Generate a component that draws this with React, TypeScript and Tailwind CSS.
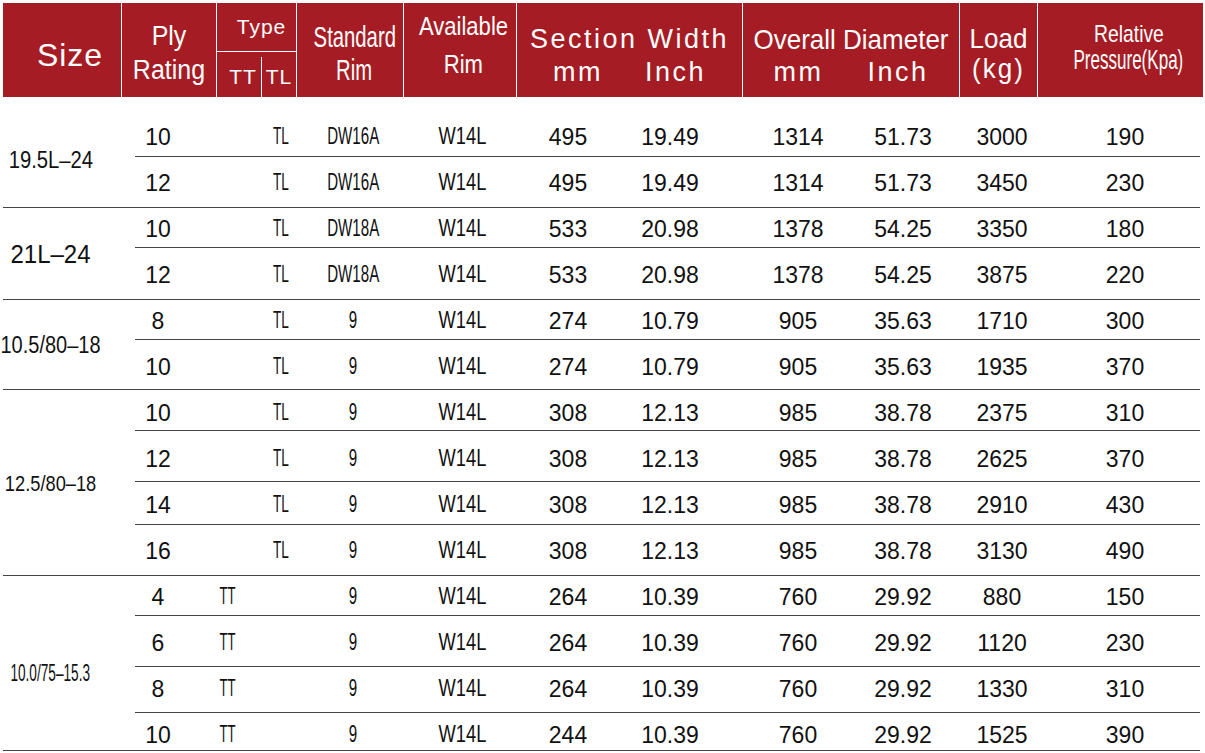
type Metric = { h: string; pt: string };

interface Group {
  size: string;
  sizeCls: string;
  pad: string;
  rows: string[][];
}

const metrics: Metric[] = [
  { h: "h-[60px]", pt: "pt-[27px]" },
  { h: "h-[50px]", pt: "pt-[13px]" },
  { h: "h-[40px]", pt: "pt-[8px]" },
  { h: "h-[51px]", pt: "pt-[14px]" },
  { h: "h-[40px]", pt: "pt-[8px]" },
  { h: "h-[49px]", pt: "pt-[14px]" },
  { h: "h-[41px]", pt: "pt-[10px]" },
  { h: "h-[51px]", pt: "pt-[15px]" },
  { h: "h-[43px]", pt: "pt-[10px]" },
  { h: "h-[50px]", pt: "pt-[13px]" },
  { h: "h-[40px]", pt: "pt-[8px]" },
  { h: "h-[51px]", pt: "pt-[14px]" },
  { h: "h-[46px]", pt: "pt-[9px]" },
  { h: "h-[37px]", pt: "pt-[9px]" },
];

const groups: Group[] = [
  {
    size: "19.5L–24",
    sizeCls: "text-[22px] scale-x-[0.92] scale-y-[1.1]",
    pad: "pt-[16px]",
    rows: [
      ["10", "", "TL", "DW16A", "W14L", "495", "19.49", "1314", "51.73", "3000", "190"],
      ["12", "", "TL", "DW16A", "W14L", "495", "19.49", "1314", "51.73", "3450", "230"],
    ],
  },
  {
    size: "21L–24",
    sizeCls: "text-[24px] scale-y-[1.05]",
    pad: "pt-[2px]",
    rows: [
      ["10", "", "TL", "DW18A", "W14L", "533", "20.98", "1378", "54.25", "3350", "180"],
      ["12", "", "TL", "DW18A", "W14L", "533", "20.98", "1378", "54.25", "3875", "220"],
    ],
  },
  {
    size: "10.5/80–18",
    sizeCls: "text-[23px] scale-x-[0.87] scale-y-[1.05]",
    pad: "pt-0",
    rows: [
      ["8", "", "TL", "9", "W14L", "274", "10.79", "905", "35.63", "1710", "300"],
      ["10", "", "TL", "9", "W14L", "274", "10.79", "905", "35.63", "1935", "370"],
    ],
  },
  {
    size: "12.5/80–18",
    sizeCls: "text-[21px] scale-x-[0.87] scale-y-[1.08]",
    pad: "pt-0",
    rows: [
      ["10", "", "TL", "9", "W14L", "308", "12.13", "985", "38.78", "2375", "310"],
      ["12", "", "TL", "9", "W14L", "308", "12.13", "985", "38.78", "2625", "370"],
      ["14", "", "TL", "9", "W14L", "308", "12.13", "985", "38.78", "2910", "430"],
      ["16", "", "TL", "9", "W14L", "308", "12.13", "985", "38.78", "3130", "490"],
    ],
  },
  {
    size: "10.0/75–15.3",
    sizeCls: "text-[22px] scale-x-[0.62] scale-y-[1.12]",
    pad: "pt-[20px]",
    rows: [
      ["4", "TT", "", "9", "W14L", "264", "10.39", "760", "29.92", "880", "150"],
      ["6", "TT", "", "9", "W14L", "264", "10.39", "760", "29.92", "1120", "230"],
      ["8", "TT", "", "9", "W14L", "264", "10.39", "760", "29.92", "1330", "310"],
      ["10", "TT", "", "9", "W14L", "244", "10.39", "760", "29.92", "1525", "390"],
    ],
  },
];

// text style per data column
const num = "text-[23px] scale-y-[1.08]";
const colCls = [
  num,
  "text-[22px] scale-x-[0.6] scale-y-[1.12]",
  "text-[22px] scale-x-[0.62] scale-y-[1.12]",
  "text-[21px] scale-x-[0.72] scale-y-[1.1]",
  "text-[21px] scale-x-[0.87] scale-y-[1.1]",
  num,
  num,
  num,
  num,
  num,
  num,
];

const T = ({ children, className }: { children: React.ReactNode; className: string }) => (
  <span className={`inline-block whitespace-nowrap ${className}`}>{children}</span>
);

const Header = () => (
  <div className="ml-[3px] mt-[3px] flex h-[94px] w-[1200px] bg-[#a61c24] text-white">
    <div className="flex w-[118px] items-center justify-center pl-[16px] pt-[10px]">
      <T className="text-[32px] tracking-[1px]">Size</T>
    </div>
    <div className="flex w-[95px] flex-col items-center justify-center border-l border-white pt-[4px] leading-[34px]">
      <T className="text-[25px] scale-y-[1.08]">Ply</T>
      <T className="text-[25px] scale-y-[1.08]">Rating</T>
    </div>
    <div className="flex w-[80px] flex-col border-l border-white">
      <div className="flex h-[49px] items-center justify-center border-b border-white pl-[10px]">
        <T className="text-[21px] tracking-[1px]">Type</T>
      </div>
      <div className="flex flex-1 pt-[5px]">
        <div className="flex w-[45px] items-center justify-center border-r border-white pl-2">
          <T className="text-[21px] tracking-[1px]">TT</T>
        </div>
        <div className="flex flex-1 items-center justify-center">
          <T className="text-[21px] tracking-[1px]">TL</T>
        </div>
      </div>
    </div>
    <div className="flex w-[107px] flex-col items-center justify-center border-l border-white pl-[9px] pt-[7px] leading-[33px]">
      <T className="text-[26px] scale-x-[0.78] scale-y-[1.1]">Standard</T>
      <T className="text-[26px] scale-x-[0.78] scale-y-[1.1]">Rim</T>
    </div>
    <div className="flex w-[113px] flex-col items-center justify-center border-l border-white pb-[10px] pl-[7px] leading-[38px]">
      <T className="text-[24px] scale-x-[0.92] scale-y-[1.1]">Available</T>
      <T className="text-[24px] scale-x-[0.92] scale-y-[1.1]">Rim</T>
    </div>
    <div className="flex w-[226px] flex-col items-center justify-center border-l border-white pt-[11px] leading-[33px]">
      <T className="text-[27px] tracking-[2.5px]">Section Width</T>
      <div className="flex gap-[42px]">
        <T className="text-[27px] tracking-[2.5px]">mm</T>
        <T className="text-[27px] tracking-[2.5px]">Inch</T>
      </div>
    </div>
    <div className="flex w-[217px] flex-col items-center justify-center border-l border-white pt-[11px] leading-[33px]">
      <T className="text-[26px] scale-y-[1.08]">Overall Diameter</T>
      <div className="flex gap-[44px]">
        <T className="text-[27px] tracking-[2.5px]">mm</T>
        <T className="text-[27px] tracking-[2.5px]">Inch</T>
      </div>
    </div>
    <div className="flex w-[78px] flex-col items-center justify-center border-l border-white pt-[6px] leading-[30px]">
      <T className="text-[26px] scale-y-[1.08]">Load</T>
      <T className="text-[26px] tracking-[2px] scale-y-[1.08]">(kg)</T>
    </div>
    <div className="flex w-[166px] flex-col items-center justify-center border-l border-white pb-[6px] pl-[16px] leading-[26px]">
      <T className="text-[21px] scale-x-[0.92] scale-y-[1.12]">Relative</T>
      <T className="text-[24px] scale-x-[0.71] scale-y-[1.12]">Pressure(Kpa)</T>
    </div>
  </div>
);

export default function App() {
  let idx = 0;
  return (
    <div className="h-[753px] w-[1205px] overflow-hidden bg-white font-['Liberation_Sans',Arial,sans-serif] text-[#111]">
      <Header />
      <div className="ml-[3px] w-[1197px]">
        {groups.map((g) => (
          <div key={g.size} className="flex border-b border-[#444]">
            <div className={`flex w-[132px] items-center ${g.pad}`}>
              <div className="flex w-[95px] justify-center">
                <T className={`leading-[24px] ${g.sizeCls}`}>{g.size}</T>
              </div>
            </div>
            <div className="flex-1">
              {g.rows.map((r, i) => {
                const m = metrics[idx++];
                const last = i === g.rows.length - 1;
                return (
                  <div
                    key={i}
                    className={`grid grid-cols-[46px_92px_16px_128px_90px_122px_82px_174px_36px_162px_84px] items-start ${m.h} ${m.pt} ${last ? "" : "border-b border-[#444]"}`}
                  >
                    {r.map((v, j) => (
                      <div key={j} className="flex justify-center">
                        <T className={`leading-[24px] ${colCls[j]}`}>{v}</T>
                      </div>
                    ))}
                  </div>
                );
              })}
            </div>
          </div>
        ))}
      </div>
    </div>
  );
}
